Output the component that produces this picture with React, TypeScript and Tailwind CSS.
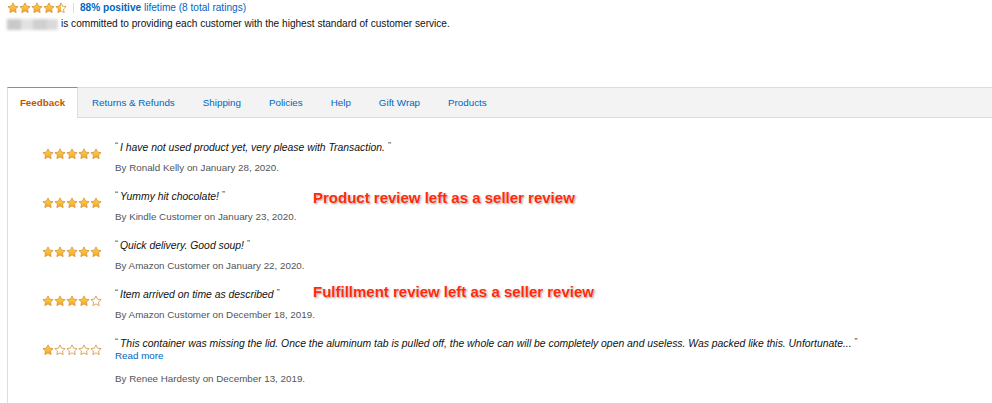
import React from "react";

type Fill = "full" | "half" | "empty";

const STAR =
  "M12 1.8l3.1 6.5 7.1.9-5.2 4.9 1.3 7.1L12 17.8l-6.3 3.4 1.3-7.1-5.2-4.9 7.1-.9z";

function Star({ fill, size, id }: { fill: Fill; size: number; id: string }) {
  return (
    <svg width={size} height={size} viewBox="0 0 24 24" className="block">
      <defs>
        <linearGradient id={`g-${id}`} x1="0" y1="0" x2="0" y2="1">
          <stop offset="0" stopColor="#ffd54a" />
          <stop offset="1" stopColor="#f5a623" />
        </linearGradient>
        <clipPath id={`c-${id}`}>
          <rect x="0" y="0" width="12" height="24" />
        </clipPath>
      </defs>
      <path d={STAR} fill="#fff" />
      {fill === "full" && <path d={STAR} fill={`url(#g-${id})`} />}
      {fill === "half" && (
        <path d={STAR} fill={`url(#g-${id})`} clipPath={`url(#c-${id})`} />
      )}
      <path d={STAR} fill="none" stroke="#d3913a" strokeWidth="1.6" strokeLinejoin="round" />
    </svg>
  );
}

function Stars({ value, size, prefix }: { value: number; size: number; prefix: string }) {
  return (
    <div className="flex">
      {[0, 1, 2, 3, 4].map((i) => {
        const fill: Fill = value >= i + 1 ? "full" : value >= i + 0.5 ? "half" : "empty";
        return <Star key={i} fill={fill} size={size} id={`${prefix}-${i}`} />;
      })}
    </div>
  );
}

const tabs = ["Returns & Refunds", "Shipping", "Policies", "Help", "Gift Wrap", "Products"];

interface Review {
  stars: number;
  text: string;
  by: string;
  more?: boolean;
  note?: string;
  noteTop?: string;
}

const reviews: Review[] = [
  { stars: 5, text: "I have not used product yet, very please with Transaction.", by: "By Ronald Kelly on January 28, 2020." },
  {
    stars: 5,
    text: "Yummy hit chocolate!",
    by: "By Kindle Customer on January 23, 2020.",
    note: "Product review left as a seller review",
    noteTop: "top-[1px]",
  },
  { stars: 5, text: "Quick delivery. Good soup!", by: "By Amazon Customer on January 22, 2020." },
  {
    stars: 4,
    text: "Item arrived on time as described",
    by: "By Amazon Customer on December 18, 2019.",
    note: "Fulfillment review left as a seller review",
    noteTop: "top-[-3px]",
  },
  {
    stars: 1,
    text: "This container was missing the lid. Once the aluminum tab is pulled off, the whole can will be completely open and useless. Was packed like this. Unfortunate...",
    by: "By Renee Hardesty on December 13, 2019.",
    more: true,
  },
];

export default function App() {
  return (
    <div className="h-[403px] w-[992px] overflow-hidden bg-white font-['Liberation_Sans',Arial,sans-serif] text-[10.1px] leading-[14px] text-[#111]">
      <div className="px-[7px] pt-[1px]">
        <div className="flex items-center">
          <Stars value={4.5} size={12} prefix="top" />
          <span className="mx-[6px] h-[10px] w-px bg-[#ddd]" />
          <span className="text-[#0066c0]">
            <span className="font-bold">88% positive</span> lifetime (8 total ratings)
          </span>
        </div>
        <div className="mt-[2px] flex items-center">
          <span className="mr-[3px] flex h-[11px] w-[51px] blur-[1.5px]">
            <span className="h-full w-[14px] bg-[#c9c9c9]" />
            <span className="h-full w-[12px] bg-[#e2e2e2]" />
            <span className="h-full w-[14px] bg-[#cfcfcf]" />
            <span className="h-full w-[11px] bg-[#dadada]" />
          </span>
          <span>is committed to providing each customer with the highest standard of customer service.</span>
        </div>
      </div>

      <div className="ml-[7px] mt-[56px] flex h-[31px] text-[9.8px]">
        <div className="flex w-[71px] items-center justify-center border-t border-r border-l border-t-[#e47911] border-r-[#ddd] border-l-[#ddd] bg-white font-bold text-[#c45500]">
          Feedback
        </div>
        <div className="flex flex-1 items-center border-y border-[#ddd] bg-[#f3f3f3]">
          {tabs.map((t) => (
            <span key={t} className="px-[14px] text-[#0066c0]">
              {t}
            </span>
          ))}
        </div>
      </div>

      <div className="ml-[7px] h-[300px] border-l border-[#ddd] pl-[34px] pt-[23px]">
        {reviews.map((r, i) => (
          <div key={i} className="mb-[15px] flex">
            <div className="w-[73px] shrink-0 pt-[7px]">
              <Stars value={r.stars} size={12} prefix={`r${i}`} />
            </div>
            <div>
              <div className="relative">
                <span className="text-[10.4px] italic">
                  <span className="relative -top-[3px] mr-[2px] text-[9px] not-italic text-[#555]">“</span>
                  {r.text}
                  <span className="relative -top-[3px] ml-[3px] text-[9px] not-italic text-[#555]">”</span>
                </span>
                {r.note && (
                  <span
                    className={`absolute left-[198px] ${r.noteTop} whitespace-nowrap text-[15px] font-bold text-[#ff2a0a] [text-shadow:0_0_2px_#fff,1px_1px_2px_rgba(0,0,0,0.45)]`}
                  >
                    {r.note}
                  </span>
                )}
              </div>
              {r.more && <div className="mt-[-2px] text-[9.8px] text-[#0066c0]">Read more</div>}
              <div className={`${r.more ? "mt-[9px]" : "mt-[6px]"} text-[9.8px] text-[#555]`}>{r.by}</div>
            </div>
          </div>
        ))}
      </div>
    </div>
  );
}
